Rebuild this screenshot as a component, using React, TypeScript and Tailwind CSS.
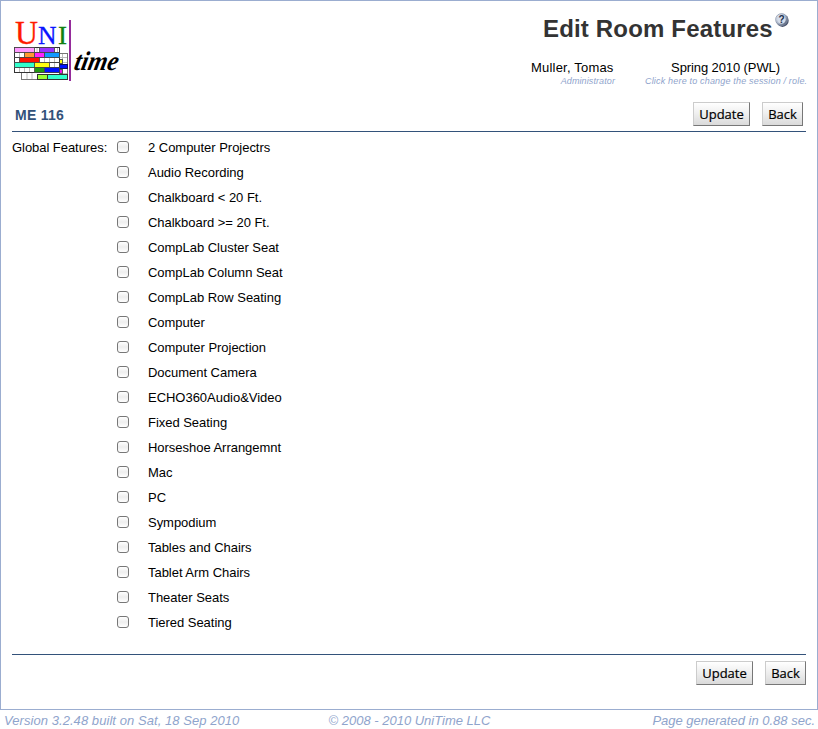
const features = [
  '2 Computer Projectrs', 'Audio Recording', 'Chalkboard < 20 Ft.', 'Chalkboard >= 20 Ft.',
  'CompLab Cluster Seat', 'CompLab Column Seat', 'CompLab Row Seating', 'Computer',
  'Computer Projection', 'Document Camera', 'ECHO360Audio&Video', 'Fixed Seating',
  'Horseshoe Arrangemnt', 'Mac', 'PC', 'Sympodium', 'Tables and Chairs',
  'Tablet Arm Chairs', 'Theater Seats', 'Tiered Seating',
];

// Timetable blocks of the logo: x, y, width, fill
const blocks: [number, number, number, string][] = [
  [14.5, 47.5, 20, '#ff99ff'], [39.5, 47.5, 15, '#9933ff'],
  [24.5, 52.5, 10, '#ff9933'], [34.5, 52.5, 10, '#ff22ff'], [44.5, 52.5, 15, '#1199ff'],
  [19.5, 57.5, 20, '#ff1100'],
  [14.5, 62.5, 20, '#33ffcc'], [34.5, 62.5, 15, '#ffff11'],
  [34.5, 67.5, 10, '#229911'], [44.5, 67.5, 15, '#0011ff'],
];

function Logo() {
  return (
    <svg className="block overflow-visible" width="110" height="66" viewBox="12 18 110 66">
      <g fontFamily="'Liberation Serif', serif" strokeWidth="0.3">
        <text x="15" y="43.5" fontSize="33" fill="#ff1a00" stroke="#ff1a00" textLength="23" lengthAdjust="spacingAndGlyphs">U</text>
        <text x="38" y="43.5" fontSize="26" fill="#0a14ff" stroke="#0a14ff" textLength="18.5" lengthAdjust="spacingAndGlyphs">N</text>
        <text x="58" y="43.5" fontSize="26" fill="#118011" stroke="#118011" textLength="9" lengthAdjust="spacingAndGlyphs">I</text>
      </g>
      <g strokeWidth="1">
        <rect x="21.5" y="53.5" width="46" height="26" fill="#fff" stroke="#777" />
        <path d="M27 73V79M32 73V79M62.5 54V79M60 57.5H67M60 62.5H67M60 73.5H67" stroke="#bbb" />
        <rect x="59.5" y="59.5" width="3" height="4" fill="#ffff11" stroke="#555" />
        <rect x="59.5" y="64.5" width="8" height="4" fill="#0011ff" stroke="#111155" />
        <rect x="59.5" y="69.5" width="3" height="4" fill="#ee11ee" stroke="#555" />
        <rect x="37.5" y="74.5" width="10" height="5" fill="#99ff33" stroke="#333" />
        <rect x="47.5" y="74.5" width="20" height="5" fill="#33ffcc" stroke="#333" />
        <rect x="14.5" y="47.5" width="45" height="25" fill="#fff" stroke="#333" />
        <path d="M19.5 48V72M24.5 48V72M29.5 48V72M37 48V52M44.5 58V62M49.5 58V67M54.5 58V67M57.5 48V52" stroke="#bbb" />
        <path d="M14 52.5H60M14 57.5H60M14 62.5H60M14 67.5H60" stroke="#444" />
        {blocks.map(([x, y, w, fill], i) => (
          <rect key={i} x={x} y={y} width={w} height="5" fill={fill} stroke="#444" strokeWidth="0.8" />
        ))}
      </g>
      <path d="M70 20V81" stroke="#952b9b" strokeWidth="2" />
      <text transform="translate(73 70) skewX(-12)" fontFamily="'Liberation Serif', serif" fontSize="27" fontWeight="bold" fontStyle="italic" fill="#000" textLength="44" lengthAdjust="spacingAndGlyphs">time</text>
    </svg>
  );
}

function HelpIcon() {
  return (
    <svg className="block" width="14" height="14" viewBox="0 0 14 14">
      <defs>
        <linearGradient id="ball" x1="0" y1="0" x2="1" y2="1">
          <stop offset="0" stopColor="#f2f5fb" />
          <stop offset="0.5" stopColor="#a9b4c8" />
          <stop offset="1" stopColor="#3d4860" />
        </linearGradient>
      </defs>
      <circle cx="7.5" cy="7.7" r="6.2" fill="#465068" />
      <circle cx="6.6" cy="6.6" r="6" fill="url(#ball)" stroke="#8490a8" strokeWidth="0.7" />
      <circle cx="6.5" cy="6.5" r="4.2" fill="#d5ddea" />
      <text x="6.6" y="10" textAnchor="middle" fontFamily="'Liberation Sans', sans-serif" fontSize="10" fontWeight="bold" fill="#20304d">?</text>
    </svg>
  );
}

function Button({ label, width }: { label: string; width: string }) {
  return (
    <button className={`${width} h-6 shrink-0 border border-t-[#cccccc] border-l-[#cccccc] border-r-[#777777] border-b-[#777777] bg-linear-to-b from-white via-[#eeeeee] to-[#dadada] text-center font-['Open_Sans',sans-serif] text-[13px] leading-[22px] font-medium text-black [-webkit-text-stroke:0.2px_black]`}>
      {label}
    </button>
  );
}

function Buttons() {
  return (
    <div className="flex gap-3">
      <Button label="Update" width="w-[57px]" />
      <Button label="Back" width="w-[41px]" />
    </div>
  );
}

export default function App() {
  return (
    <div className="h-[729px] w-[818px] overflow-hidden bg-white font-['Liberation_Sans',Arial,sans-serif] text-[13px] text-black">
      <div className="h-[710px] border border-[#9badd0] px-[11px]">
        <header className="flex h-[97px] justify-between pt-[17px]">
          <Logo />
          <div className="-mt-[5px] w-[275px]">
            <div className="flex pl-[12px]">
              <h1 className="mt-0.5 w-[232px] text-[24px] leading-[28px] font-bold tracking-[0.17px] whitespace-nowrap text-[#333333]">Edit Room Features</h1>
              <HelpIcon />
            </div>
            <div className="mt-[17px] flex justify-between whitespace-nowrap">
              <div className="w-[84px] leading-4">
                <div className="tracking-[0.2px]">Muller, Tomas</div>
                <div className="text-right text-[9px] leading-[11px] tracking-[0.1px] text-[#8fa4cc] italic">Administrator</div>
              </div>
              <div className="w-[163px] text-center leading-4">
                <div className="pl-0.5 tracking-[-0.1px]">Spring 2010 (PWL)</div>
                <div className="pl-0.5 text-[9px] leading-[11px] tracking-[0.18px] text-[#8fa4cc] italic">Click here to change the session / role.</div>
              </div>
            </div>
          </div>
        </header>
        <div className="flex h-[34px] items-start justify-between border-b border-[#33527a] pt-1 pr-[3px] pl-[3px]">
          <h2 className="mt-[5px] text-[14px] leading-4 font-bold tracking-[0.25px] text-[#33527a]">ME 116</h2>
          <Buttons />
        </div>
        <main className="flex h-[522px] pt-[3px]">
          <div className="w-[105px] leading-[25px] tracking-[-0.05px] whitespace-nowrap">Global Features:</div>
          <ul>
            {features.map((name) => (
              <li key={name}>
                <label className="flex h-[25px] items-center gap-[19px] tracking-[-0.03px] whitespace-nowrap">
                  <input type="checkbox" className="mb-0.5 h-3 w-3 appearance-none rounded-[3px] border border-[#777777] bg-linear-to-b from-white via-[#eeeeee] to-white" />
                  {name}
                </label>
              </li>
            ))}
          </ul>
        </main>
        <div className="flex justify-end border-t border-[#33527a] pt-[6px]">
          <Buttons />
        </div>
      </div>
      <footer className="grid h-[19px] grid-cols-[1fr_auto_1fr] pr-[3px] pl-1 pt-[3px] leading-4 whitespace-nowrap text-[#8fa4cc] italic">
        <span className="tracking-[0.06px]">Version 3.2.48 built on Sat, 18 Sep 2010</span>
        <span>© 2008 - 2010 UniTime LLC</span>
        <span className="text-right">Page generated in 0.88 sec.</span>
      </footer>
    </div>
  );
}
